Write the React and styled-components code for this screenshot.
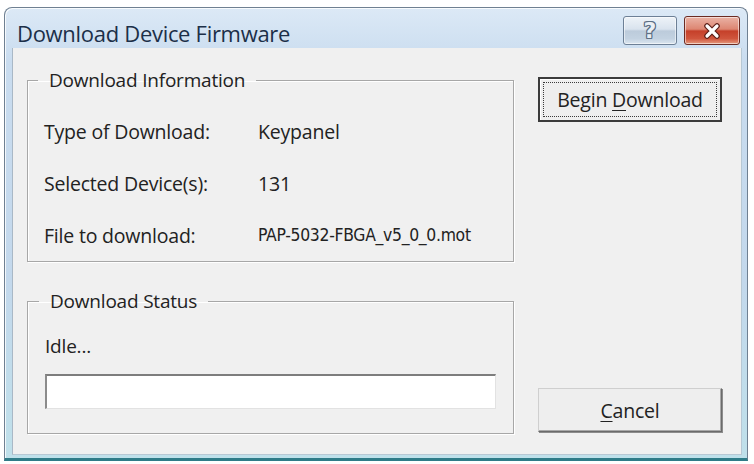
import React from "react";
import styled, { createGlobalStyle } from "styled-components";

const GlobalStyle = createGlobalStyle`
  html, body {
    margin: 0;
    padding: 0;
    background: #ffffff;
  }
  body {
    font-family: "Open Sans", "Noto Sans", sans-serif;
    color: #222;
  }
`;

const Window = styled.div`
  box-sizing: border-box;
  width: 744px;
  height: 454px;
  margin: 7px 6px 3px 4px;
  display: flex;
  flex-direction: column;
  border: 1px solid #6f8092;
  border-bottom: 3px solid #2f7c88;
  border-radius: 8px 8px 0 0;
  background: linear-gradient(to bottom, #dce9f6 0%, #c9dcef 12%, #c3d8ec 60%, #bfe0ea 100%);
  box-shadow: inset 1px 1px 0 rgba(255, 255, 255, 0.8);
  overflow: hidden;
`;

const TitleBar = styled.div`
  height: 40px;
  flex: none;
  display: flex;
  align-items: flex-start;
  padding: 8px 7px 0 12px;
  box-sizing: border-box;
`;

const Title = styled.div`
  flex: 1;
  font-size: 22px;
  line-height: 34px;
  color: #1c2f48;
  letter-spacing: -0.3px;
`;

const CaptionButton = styled.div`
  box-sizing: border-box;
  width: ${(p) => p.$w}px;
  height: 29px;
  margin-left: ${(p) => p.$gap}px;
  border: 1px solid ${(p) => (p.$close ? "#6b2b23" : "#6d8096")};
  border-radius: 3px;
  display: flex;
  align-items: center;
  justify-content: center;
  background: ${(p) =>
    p.$close
      ? "linear-gradient(to bottom, #eab3a6 0%, #dd8672 45%, #c5402a 52%, #d0553d 80%, #e59b7f 100%)"
      : "linear-gradient(to bottom, #eef3f8 0%, #d9e3ee 45%, #bccbdb 52%, #c3d2e1 80%, #dbe6f0 100%)"};
  box-shadow: inset 0 0 0 1px rgba(255, 255, 255, 0.55);
`;

const HelpGlyph = styled.span`
  font-family: "DejaVu Sans", sans-serif;
  font-weight: bold;
  font-size: 22px;
  line-height: 1;
  color: #e9eef4;
  text-shadow: 1px 0 0 #5c6f85, -1px 0 0 #5c6f85, 0 1px 0 #5c6f85, 0 -1px 0 #5c6f85,
    1px 1px 0 #5c6f85, -1px -1px 0 #5c6f85, 1px -1px 0 #5c6f85, -1px 1px 0 #5c6f85;
`;

const Client = styled.div`
  flex: 1;
  margin: 0 5px 3px 7px;
  background: #f0f0f0;
  border-left: 1px solid #a9b8c6;
  border-right: 1px solid #b7c8d4;
  border-bottom: 1px solid #b7c8d4;
  display: grid;
  grid-template-columns: 487px 184px;
  column-gap: 24px;
  padding: 20px 19px 19px 14px;
`;

const LeftColumn = styled.div`
  display: flex;
  flex-direction: column;
  gap: 27px;
`;

const Group = styled.fieldset`
  margin: 0;
  border: 1px solid #a7a7a7;
  box-shadow: inset 1px 1px 0 #ffffff, 1px 1px 0 #ffffff;
  padding: ${(p) => p.$pad};
  min-width: 0;
`;

const Legend = styled.legend`
  font-size: 19px;
  line-height: 24px;
  padding: 0 11px;
  margin-left: -6px;
  color: #222;
  letter-spacing: -0.2px;
`;

const InfoGrid = styled.div`
  display: grid;
  grid-template-columns: 214px 1fr;
  grid-auto-rows: 52px;
  align-items: center;
`;

const Label = styled.span`
  font-size: 19.5px;
  color: #222;
  letter-spacing: -0.2px;
`;

const Value = styled.span`
  font-size: ${(p) => (p.$narrow ? "17.4px" : "19.5px")};
  font-family: ${(p) =>
    p.$narrow
      ? '"Liberation Sans Narrow", "DejaVu Sans Condensed", "Open Sans", sans-serif'
      : '"Open Sans", "Noto Sans", sans-serif'};
  color: #222;
  letter-spacing: ${(p) => (p.$narrow ? "-0.3px" : "-0.2px")};
`;

const StatusText = styled.div`
  font-size: 19px;
  line-height: 24px;
  color: #222;
  letter-spacing: -0.2px;
`;

const ProgressBox = styled.div`
  margin-top: 16px;
  height: 35px;
  box-sizing: border-box;
  background: #ffffff;
  border-top: 2px solid #7d7d7d;
  border-left: 2px solid #8b8b8b;
  border-right: 1px solid #e2e2e2;
  border-bottom: 1px solid #e2e2e2;
`;

const RightColumn = styled.div`
  display: flex;
  flex-direction: column;
  justify-content: space-between;
  padding: 9px 0 3px;
`;

const Button = styled.button`
  box-sizing: border-box;
  width: 184px;
  height: ${(p) => p.$h}px;
  padding: 0;
  display: flex;
  align-items: stretch;
  font-family: "Open Sans", "Noto Sans", sans-serif;
  font-size: 19.5px;
  letter-spacing: -0.2px;
  color: #222;
  background: #eeeeee;
  border: ${(p) => (p.$default ? "2px solid #3b3b3b" : "1px solid #cfcfcf")};
  border-right-color: ${(p) => (p.$default ? "#3b3b3b" : "#6b6b6b")};
  border-bottom-color: ${(p) => (p.$default ? "#3b3b3b" : "#6b6b6b")};
  box-shadow: ${(p) =>
    p.$default ? "inset 1px 1px 0 #ffffff" : "inset -1px -1px 0 #a9a9a9, 1px 1px 0 #8c8c8c"};
`;

const ButtonFace = styled.span`
  flex: 1;
  margin: 3px;
  display: flex;
  align-items: center;
  justify-content: center;
  border: 1px dotted ${(p) => (p.$focus ? "#3a3a3a" : "transparent")};
`;

const Mnemonic = styled.u`
  text-underline-offset: 3px;
`;

export default function App() {
  return (
    <>
      <GlobalStyle />
      <Window>
        <TitleBar>
          <Title>Download Device Firmware</Title>
          <CaptionButton $w={54} $gap={0}>
            <HelpGlyph>?</HelpGlyph>
          </CaptionButton>
          <CaptionButton $w={56} $gap={7} $close>
            <svg width="22" height="18" viewBox="0 0 22 18">
              <path
                d="M6 4 L16 14 M16 4 L6 14"
                stroke="#5a1d16"
                strokeWidth="5.5"
                strokeLinecap="round"
              />
              <path
                d="M6 4 L16 14 M16 4 L6 14"
                stroke="#ffffff"
                strokeWidth="3.2"
                strokeLinecap="round"
              />
            </svg>
          </CaptionButton>
        </TitleBar>
        <Client>
          <LeftColumn>
            <Group $pad="13px 16px 0 16px">
              <Legend>Download Information</Legend>
              <InfoGrid>
                <Label>Type of Download:</Label>
                <Value>Keypanel</Value>
                <Label>Selected Device(s):</Label>
                <Value>131</Value>
                <Label>File to download:</Label>
                <Value $narrow>PAP-5032-FBGA_v5_0_0.mot</Value>
              </InfoGrid>
            </Group>
            <Group $pad="21px 17px 24px 17px">
              <Legend>Download Status</Legend>
              <StatusText>Idle...</StatusText>
              <ProgressBox />
            </Group>
          </LeftColumn>
          <RightColumn>
            <Button $default $h={45}>
              <ButtonFace $focus>
                Begin&nbsp;<Mnemonic>D</Mnemonic>ownload
              </ButtonFace>
            </Button>
            <Button $h={44}>
              <ButtonFace>
                <Mnemonic>C</Mnemonic>ancel
              </ButtonFace>
            </Button>
          </RightColumn>
        </Client>
      </Window>
    </>
  );
}
